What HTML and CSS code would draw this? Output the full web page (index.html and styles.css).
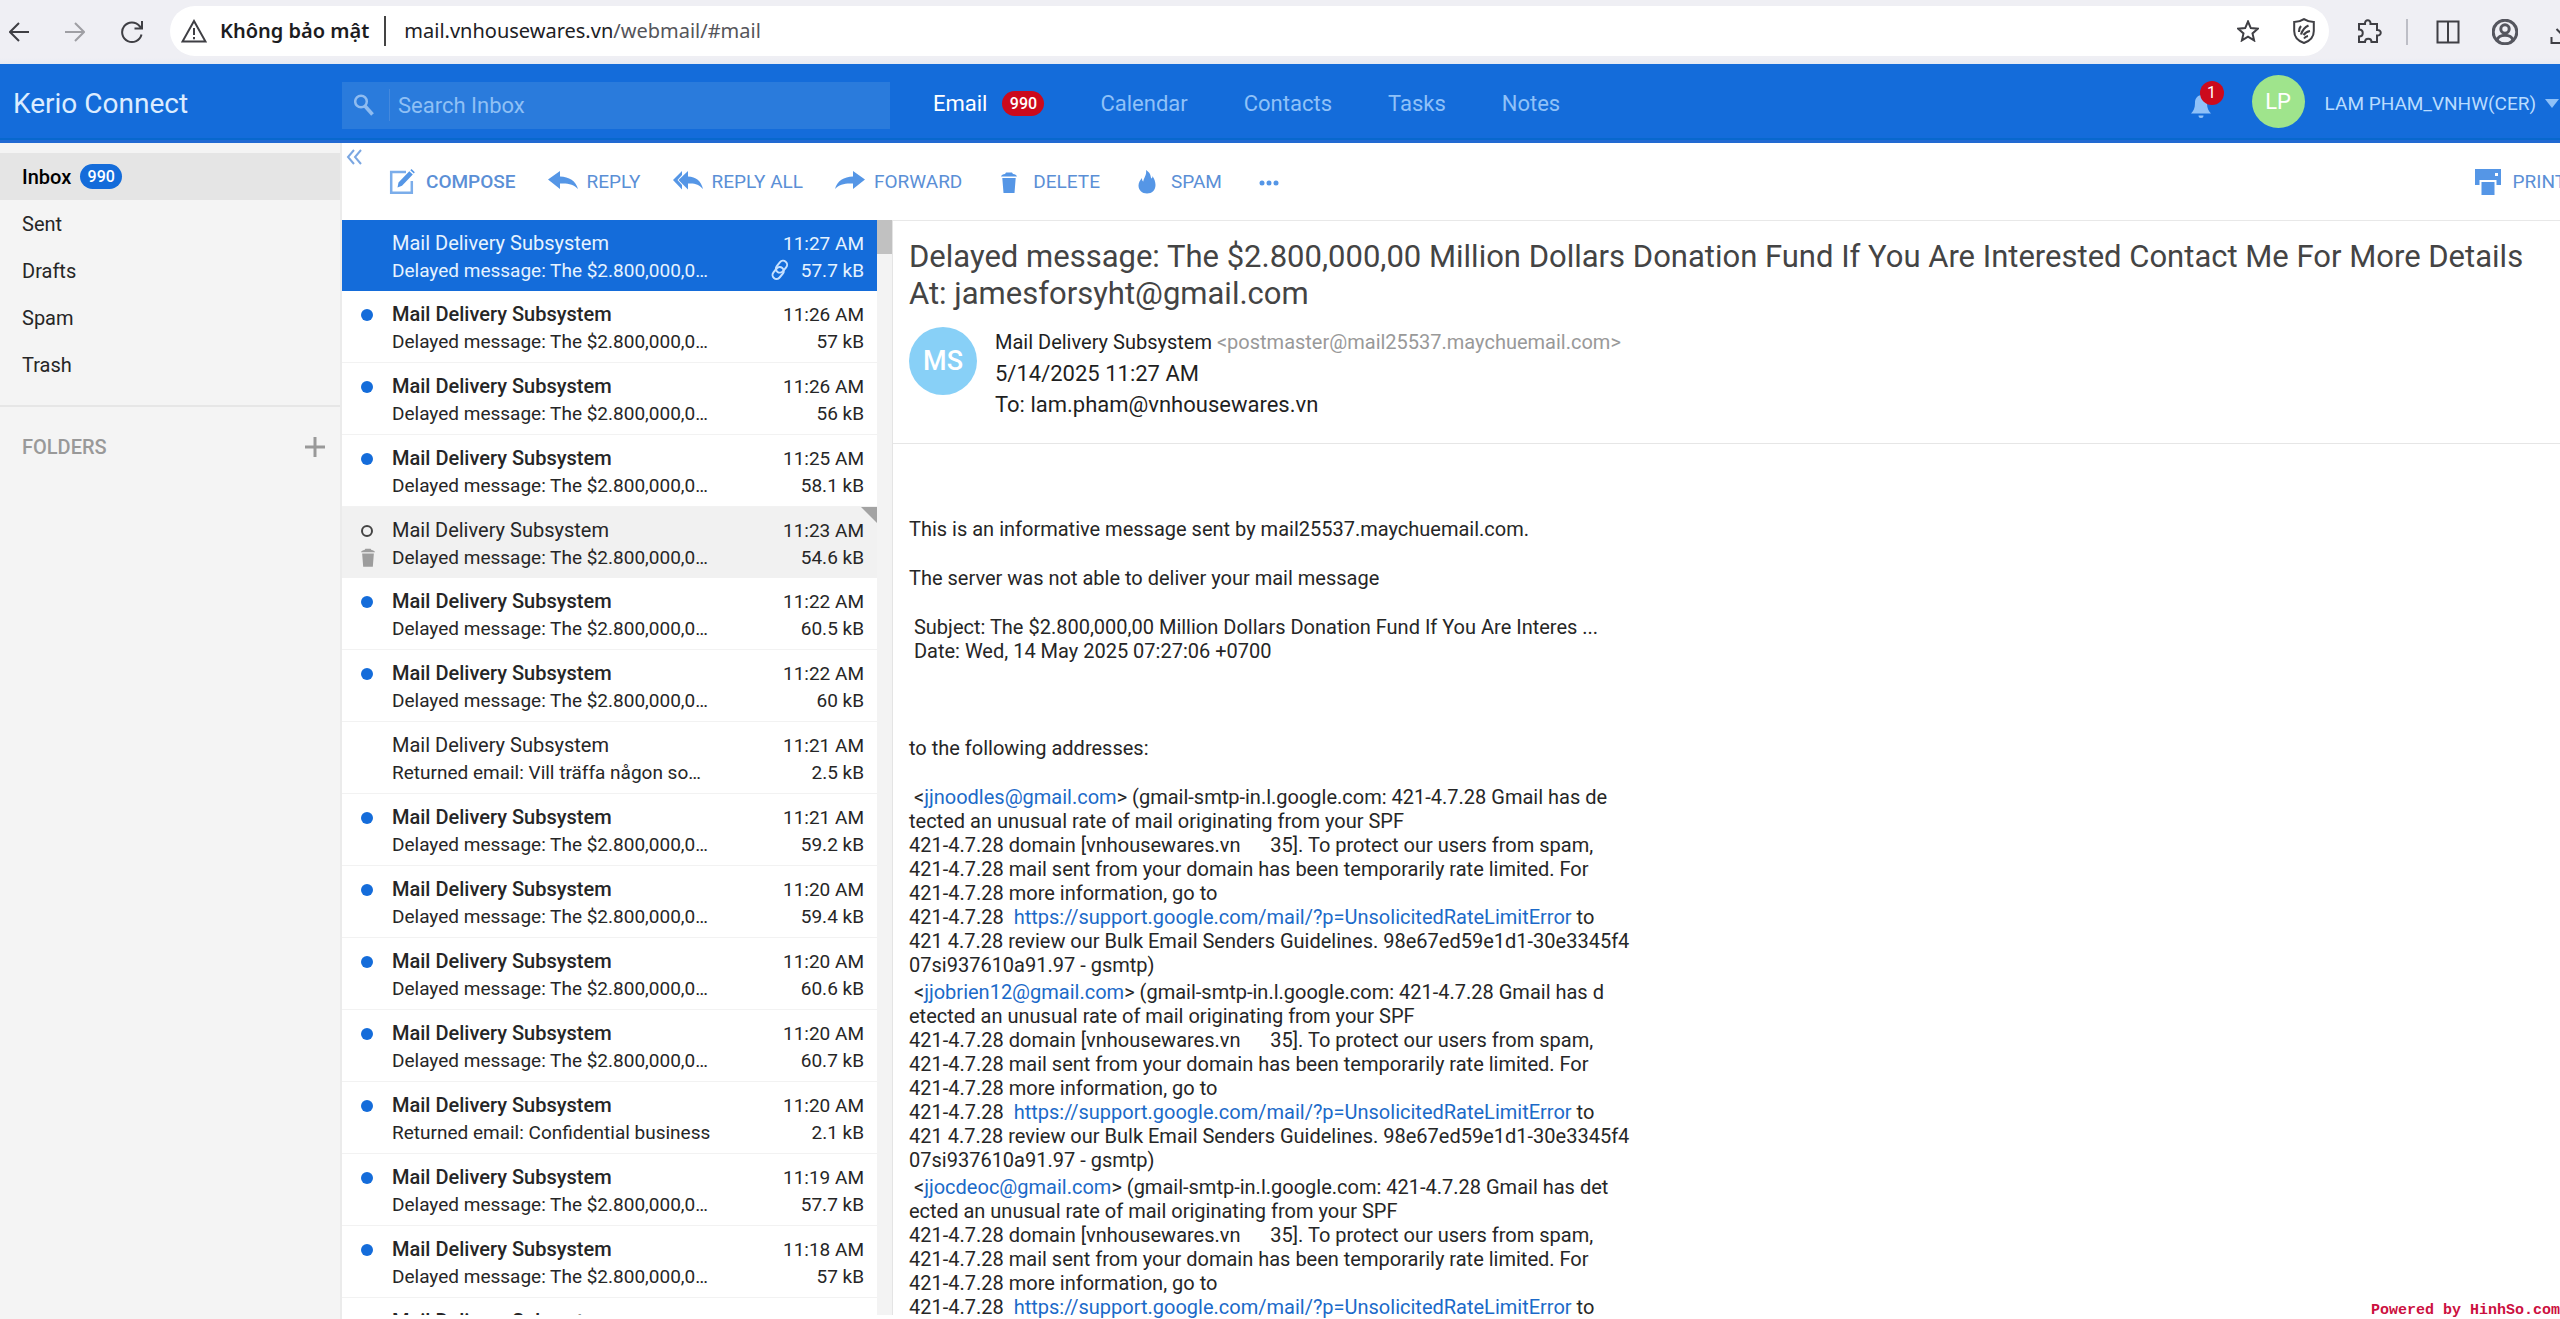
FILE: index.html
```html
<!DOCTYPE html>
<html lang="vi">
<head>
<meta charset="utf-8">
<title>Kerio Connect</title>
<link rel="stylesheet" href="styles.css">
</head>
<body>
<svg class="defs" width="0" height="0" aria-hidden="true">
  <symbol id="trash" viewBox="0 0 16 22"><path d="M5 1.500h6l1 1.500c2 .3 3.500 1 4 2.500H0C.5 4 2 3.300 4 3zM1.300 7h13.400L13.500 22h-11z"/></symbol>
  <symbol id="reply" viewBox="0 0 30 22"><path d="M0 8.500 12 0v5.500c9 .3 16 4.500 18 12.500-4-4.500-10-6-18-5.500V18z"/></symbol>
</svg>

<div class="browser">
  <div class="browser-nav">
    <button aria-label="Back"><svg width="20" height="22" viewBox="0 0 20 22"><path d="M20 11H1M10 2 1 11l9 9"/></svg></button>
    <button aria-label="Forward" class="off"><svg width="20" height="22" viewBox="0 0 20 22"><path d="M0 11h19M10 2l9 9-9 9"/></svg></button>
    <button aria-label="Reload"><svg width="22" height="24" viewBox="0 0 22 24"><path d="M20.500 14.500A9.800 9.800 0 1 1 18.500 6L21 8.500M21 1v7.500h-7.500"/></svg></button>
  </div>
  <div class="omnibox">
    <svg width="26" height="24" viewBox="0 0 26 24"><path d="M13 2 24.500 22.500h-23zM13 9v7M13 18v2.200"/></svg>
    <strong class="insecure">Không bảo mật</strong>
    <span class="url">mail.vnhousewares.vn<span class="path">/webmail/#mail</span></span>
    <button aria-label="Bookmark" class="star"><svg width="22" height="22" viewBox="0 0 22 22"><path d="m11 1.500 2.800 6.600 7 .6-5.300 4.700 1.600 7L11 16.600l-6.100 3.800 1.600-7L1.200 8.700l7-.6z"/></svg></button>
    <button aria-label="Shield"><svg width="22" height="26" viewBox="0 0 22 26"><path d="M11 1.200c3 2 6 2.800 9.800 2.800v9c0 6-4 10-9.800 12C5.200 23 1.200 19 1.200 13V4C5 4 8 3.200 11 1.200z"/><path d="M15.500 7.500C12 9 9.500 12 8 16.500M8 8c-1.500 1.500-2 3.500-2 6M17 13c-3 .5-5 2-6.500 4" stroke-width="2.200"/><path d="M15 18c-2 .3-3 1-4 2.500"/></svg></button>
  </div>
  <div class="browser-tools">
    <button aria-label="Extensions"><svg width="26" height="26" viewBox="0 0 26 26"><path d="M3 5h6c-.5-5 6-5 5.500 0H21v6c5-.5 5 6 0 5.500V23h-5.500c0-4.500-6.500-4.500-6.500 0H3v-5.500c5 0 5-7 0-7z"/></svg></button>
    <span class="sep"></span>
    <button aria-label="Split"><svg width="24" height="24" viewBox="0 0 24 24"><path d="M1.500 1.500h21v21h-21zM12 1.500v21"/></svg></button>
    <button aria-label="Profile"><svg width="26" height="26" viewBox="0 0 26 26" class="thick"><circle cx="13" cy="13" r="11.800"/><circle cx="13" cy="10" r="4.200"/><path d="M5 21.500c1-7 15-7 16 0"/></svg></button>
    <button aria-label="Downloads"><svg width="26" height="26" viewBox="0 0 26 26"><path d="M13 1v15M6.500 10l6.500 6.500 6.500-6.500M1.500 18v6h23v-6"/></svg></button>
  </div>
</div>

<header class="topbar">
  <div class="brand">Kerio Connect</div>
  <form class="search">
    <svg width="20" height="22" viewBox="0 0 20 22"><circle cx="7" cy="7.500" r="5.800"/><path d="M11 12l7.500 8.500" stroke-width="3.600"/></svg>
    <input type="text" placeholder="Search Inbox" aria-label="Search Inbox">
  </form>
  <nav class="modules">
    <a href="#mail" class="current">Email <span class="badge red">990</span></a>
    <a href="#calendar">Calendar</a>
    <a href="#contacts">Contacts</a>
    <a href="#tasks">Tasks</a>
    <a href="#notes">Notes</a>
  </nav>
  <button class="bell" aria-label="Notifications">
    <svg width="20" height="24" viewBox="0 0 20 24"><path d="M10 0c4.500 1 6 4 6 8 0 5 1.500 8 4 10.500H0C2.500 16 4 13 4 8c0-4 1.500-7 6-8zM7.500 20.500h5a2.500 2.500 0 0 1-5 0z"/></svg>
    <span class="count">1</span>
  </button>
  <span class="avatar me">LP</span>
  <button class="user">LAM PHAM_VNHW(CER)<span class="caret"></span></button>
</header>

<div class="app">
  <aside class="sidebar">
    <ul class="folders">
      <li class="active"><a href="#inbox">Inbox</a><span class="badge blue">990</span></li>
      <li><a href="#sent">Sent</a></li>
      <li><a href="#drafts">Drafts</a></li>
      <li><a href="#spam">Spam</a></li>
      <li><a href="#trash">Trash</a></li>
    </ul>
    <div class="folders-head">FOLDERS
      <button aria-label="Add folder"><svg width="20" height="20" viewBox="0 0 20 20"><path d="M10 0v20M0 10h20"/></svg></button>
    </div>
  </aside>

  <div class="work">
    <div class="toolbar">
      <button class="collapse" aria-label="Collapse"><svg width="17" height="16" viewBox="0 0 17 16"><path d="M8 1 2 8l6 7M15 1 9 8l6 7"/></svg></button>
      <button class="tool strong"><svg width="30" height="26" viewBox="0 0 30 26"><path class="line" d="M19 3H4.200v20.800h20.600V12"/><path d="m10.500 18.500 1-5L22.300 2.200l3.500 3.200L15 16.800zM23.300 1.200 24.500 0l3.300 3.200-1 1.200z"/></svg>COMPOSE</button>
      <button class="tool"><svg width="30" height="22"><use href="#reply"/></svg>REPLY</button>
      <button class="tool"><svg width="30" height="22" viewBox="0 0 30 22"><path d="M0 9 9 0v4L4.500 9 9 14v4.500zM5.500 9 15 0v5.500c8 .3 13 4.500 15 12.500-4-4.500-8-6-15-5.500v6z"/></svg>REPLY ALL</button>
      <button class="tool"><svg width="30" height="22" viewBox="0 0 30 22"><path d="M30 8.500 18 0v5.500C9 5.800 2 10 0 18c4-4.500 10-6 18-5.500V18z"/></svg>FORWARD</button>
      <button class="tool"><svg width="30" height="22"><use href="#trash"/></svg>DELETE</button>
      <button class="tool"><svg width="30" height="24" viewBox="0 0 30 24"><path d="M14 0c6 4 4 7 5.500 8.500C20.500 8 20.500 7 20.300 6c2 2.500 3.200 6 3.200 9 0 5-3.500 8.500-8.500 8.500S6.500 20 6.500 15.500c0-3 1.500-5 3.500-7.500 0 2 .3 3 1.300 3.500C11.500 8 15 5 14 0z"/></svg>SPAM</button>
      <button class="tool" aria-label="More"><svg width="30" height="8" viewBox="0 0 30 8"><circle cx="8" cy="5" r="2.500"/><circle cx="15" cy="5" r="2.500"/><circle cx="22" cy="5" r="2.500"/></svg></button>
      <button class="tool print"><svg width="26" height="26" viewBox="0 0 26 26"><path fill-rule="evenodd" d="M0 0h26v16h-4.500v-5h-17v5H0zM20 4v3h3V4zM6.500 13h13v13h-13z"/></svg>PRINT</button>
    </div>

    <div class="panes">
      <div class="list-pane">
        <ul class="list">
          <li class="selected"><span class="from">Mail Delivery Subsystem</span><time>11:27 AM</time><span class="preview">Delayed message: The $2.800,000,0…</span><span class="size"><svg width="20" height="20" viewBox="0 0 20 20"><g transform="rotate(-50 10 10)"><rect x="0" y="6.500" width="13" height="8" rx="4"/><rect x="7" y="5" width="13" height="8" rx="4"/></g></svg>57.7 kB</span></li>
          <li class="unread"><i class="dot"></i><span class="from">Mail Delivery Subsystem</span><time>11:26 AM</time><span class="preview">Delayed message: The $2.800,000,0…</span><span class="size">57 kB</span></li>
          <li class="unread"><i class="dot"></i><span class="from">Mail Delivery Subsystem</span><time>11:26 AM</time><span class="preview">Delayed message: The $2.800,000,0…</span><span class="size">56 kB</span></li>
          <li class="unread"><i class="dot"></i><span class="from">Mail Delivery Subsystem</span><time>11:25 AM</time><span class="preview">Delayed message: The $2.800,000,0…</span><span class="size">58.1 kB</span></li>
          <li class="hover"><i class="dot"></i><span class="from">Mail Delivery Subsystem</span><time>11:23 AM</time><svg class="bin" width="14" height="20"><use href="#trash"/></svg><span class="preview">Delayed message: The $2.800,000,0…</span><span class="size">54.6 kB</span></li>
          <li class="unread"><i class="dot"></i><span class="from">Mail Delivery Subsystem</span><time>11:22 AM</time><span class="preview">Delayed message: The $2.800,000,0…</span><span class="size">60.5 kB</span></li>
          <li class="unread"><i class="dot"></i><span class="from">Mail Delivery Subsystem</span><time>11:22 AM</time><span class="preview">Delayed message: The $2.800,000,0…</span><span class="size">60 kB</span></li>
          <li><span class="from">Mail Delivery Subsystem</span><time>11:21 AM</time><span class="preview">Returned email: Vill träffa någon so…</span><span class="size">2.5 kB</span></li>
          <li class="unread"><i class="dot"></i><span class="from">Mail Delivery Subsystem</span><time>11:21 AM</time><span class="preview">Delayed message: The $2.800,000,0…</span><span class="size">59.2 kB</span></li>
          <li class="unread"><i class="dot"></i><span class="from">Mail Delivery Subsystem</span><time>11:20 AM</time><span class="preview">Delayed message: The $2.800,000,0…</span><span class="size">59.4 kB</span></li>
          <li class="unread"><i class="dot"></i><span class="from">Mail Delivery Subsystem</span><time>11:20 AM</time><span class="preview">Delayed message: The $2.800,000,0…</span><span class="size">60.6 kB</span></li>
          <li class="unread"><i class="dot"></i><span class="from">Mail Delivery Subsystem</span><time>11:20 AM</time><span class="preview">Delayed message: The $2.800,000,0…</span><span class="size">60.7 kB</span></li>
          <li class="unread"><i class="dot"></i><span class="from">Mail Delivery Subsystem</span><time>11:20 AM</time><span class="preview">Returned email: Confidential business</span><span class="size">2.1 kB</span></li>
          <li class="unread"><i class="dot"></i><span class="from">Mail Delivery Subsystem</span><time>11:19 AM</time><span class="preview">Delayed message: The $2.800,000,0…</span><span class="size">57.7 kB</span></li>
          <li class="unread"><i class="dot"></i><span class="from">Mail Delivery Subsystem</span><time>11:18 AM</time><span class="preview">Delayed message: The $2.800,000,0…</span><span class="size">57 kB</span></li>
          <li class="unread"><i class="dot"></i><span class="from">Mail Delivery Subsystem</span><time>11:17 AM</time></li>
        </ul>
        <div class="scrollbar"><div class="thumb"></div></div>
      </div>

      <article class="message">
        <header class="message-head">
          <h1>Delayed message: The $2.800,000,00 Million Dollars Donation Fund If You Are Interested Contact Me For More Details At: jamesforsyht@gmail.com</h1>
          <div class="sender">
            <span class="avatar ms">MS</span>
            <div class="meta">
              <div class="who">Mail Delivery Subsystem <span class="addr">&lt;postmaster@mail25537.maychuemail.com&gt;</span></div>
              <div>5/14/2025 11:27 AM</div>
              <div>To: lam.pham@vnhousewares.vn</div>
            </div>
          </div>
        </header>
        <div class="body">
<p>This is an informative message sent by mail25537.maychuemail.com.</p>
<p>The server was not able to deliver your mail message</p>
<p class="quoted"> Subject: The $2.800,000,00 Million Dollars Donation Fund If You Are Interes ...
 Date: Wed, 14 May 2025 07:27:06 +0700</p>
<p>to the following addresses:</p>
<p class="failure"> &lt;<a href="#a1">jjnoodles@gmail.com</a>&gt; (gmail-smtp-in.l.google.com: 421-4.7.28 Gmail has de
tected an unusual rate of mail originating from your SPF
421-4.7.28 domain [vnhousewares.vn      35]. To protect our users from spam,
421-4.7.28 mail sent from your domain has been temporarily rate limited. For
421-4.7.28 more information, go to
421-4.7.28  <a href="#l1">https://support.google.com/mail/?p=UnsolicitedRateLimitError</a> to
421 4.7.28 review our Bulk Email Senders Guidelines. 98e67ed59e1d1-30e3345f4
07si937610a91.97 - gsmtp)</p>
<p class="failure"> &lt;<a href="#a2">jjobrien12@gmail.com</a>&gt; (gmail-smtp-in.l.google.com: 421-4.7.28 Gmail has d
etected an unusual rate of mail originating from your SPF
421-4.7.28 domain [vnhousewares.vn      35]. To protect our users from spam,
421-4.7.28 mail sent from your domain has been temporarily rate limited. For
421-4.7.28 more information, go to
421-4.7.28  <a href="#l2">https://support.google.com/mail/?p=UnsolicitedRateLimitError</a> to
421 4.7.28 review our Bulk Email Senders Guidelines. 98e67ed59e1d1-30e3345f4
07si937610a91.97 - gsmtp)</p>
<p class="failure"> &lt;<a href="#a3">jjocdeoc@gmail.com</a>&gt; (gmail-smtp-in.l.google.com: 421-4.7.28 Gmail has det
ected an unusual rate of mail originating from your SPF
421-4.7.28 domain [vnhousewares.vn      35]. To protect our users from spam,
421-4.7.28 mail sent from your domain has been temporarily rate limited. For
421-4.7.28 more information, go to
421-4.7.28  <a href="#l3">https://support.google.com/mail/?p=UnsolicitedRateLimitError</a> to</p>
        </div>
      </article>
    </div>
  </div>
</div>
<div class="credit">Powered by HinhSo.com</div>
</body>
</html>
```
FILE: styles.css
```css
* { box-sizing: border-box; }

body {
  margin: 0;
  height: 100vh;
  display: flex;
  flex-direction: column;
  overflow: hidden;
  position: relative;
  background: #fff;
  color: #262626;
  font: 20px/24px Roboto, sans-serif;
}

button { border: 0; padding: 0; background: none; color: inherit; font: inherit; }
a { color: inherit; text-decoration: none; }
ul { list-style: none; margin: 0; padding: 0; }
svg { display: block; flex: none; }
.defs { position: absolute; }

/* browser chrome */
.browser {
  flex: none;
  height: 64px;
  display: flex;
  align-items: center;
  padding-left: 9px;
  gap: 27px;
  background: linear-gradient(#efeff4 58px, #e6eaf3);
  font-family: "Noto Sans", sans-serif;
}
.browser svg { fill: none; stroke: #3f3f44; stroke-width: 2; }
.browser .thick { stroke: #55565e; stroke-width: 3; }
.browser-nav { display: flex; align-items: center; gap: 36px; }
.off { opacity: .45; }
.omnibox {
  flex: 1;
  height: 50px;
  margin-bottom: 2px;
  border-radius: 25px;
  background: #fff;
  display: flex;
  align-items: center;
  padding: 0 14px 0 11px;
}
.insecure {
  margin-left: 13px;
  padding-right: 15px;
  border-right: 2px solid #444;
  line-height: 30px;
  font-weight: 600;
  color: #1c1c1f;
}
.url { flex: 1; margin-left: 18px; color: #202024; }
.path { color: #55555a; }
.star { margin-right: 34px; }
.browser-tools { display: flex; align-items: center; gap: 32px; margin-right: -16px; }
.sep { width: 2px; height: 26px; margin: 0 -4px 0 -8px; background: #bdbec6; }

/* application header */
.topbar {
  flex: none;
  height: 79px;
  display: flex;
  align-items: center;
  background: #146cda;
  box-shadow: inset 0 -3px #2169d2, inset 0 -5px #0868cd;
  color: #8fc1f8;
  font-size: 22px;
}
.brand { width: 342px; padding-left: 13px; font-size: 28px; color: #dcecff; }
.search {
  width: 548px;
  height: 47px;
  margin-top: 3px;
  display: flex;
  align-items: center;
  padding-left: 12px;
  gap: 15px;
  background: #2a7bdc;
}
.search svg { fill: none; stroke: #8fbcf0; stroke-width: 2.500; }
.search input {
  flex: 1;
  min-width: 0;
  height: 32px;
  border: 0;
  border-left: 1px solid #4489de;
  padding: 0 0 0 8px;
  background: none;
  font: inherit;
  color: #fff;
  outline: 0;
}
.search input::placeholder { color: #8fc0f5; opacity: 1; }
.modules { flex: 1; display: flex; align-items: center; gap: 56px; padding-left: 43px; }
.modules .current { display: flex; align-items: center; gap: 15px; color: #fff; }
.badge {
  height: 25px;
  min-width: 42px;
  border-radius: 13px;
  text-align: center;
  font-size: 16px;
  font-weight: 500;
  line-height: 25px;
  color: #fff;
}
.red { background: #cc0a1c; }
.blue { background: #146cda; }
.bell { position: relative; margin: 6px 41px 0 0; }
.bell svg { fill: #8fc1f8; }
.count {
  position: absolute;
  left: 9px;
  top: -14px;
  width: 24px;
  height: 24px;
  border-radius: 50%;
  background: #cc0a1c;
  color: #fff;
  font-size: 16px;
}
.avatar { flex: none; border-radius: 50%; display: grid; place-items: center; color: #fff; }
.me { width: 53px; height: 53px; margin-bottom: 4px; background: #9fe48c; }
.user {
  display: flex;
  align-items: center;
  gap: 9px;
  padding: 0 1px 0 20px;
  font-size: 19px;
  color: #b9dcff;
}
.caret { border: 7px solid transparent; border-top: 9px solid #8fc1f8; border-bottom: 0; }

/* folders */
.app { flex: 1; min-height: 0; display: flex; }
.sidebar {
  flex: none;
  width: 342px;
  padding-top: 10px;
  background: #f4f4f4;
  border-right: 2px solid #ebebeb;
}
.folders { padding-bottom: 17px; border-bottom: 2px solid #e6e6e6; }
.folders li { height: 47px; display: flex; align-items: center; gap: 9px; padding-left: 22px; }
.folders .active { background: #e5e5e5; color: #000; font-weight: 500; }
.folders-head {
  display: flex;
  align-items: center;
  justify-content: space-between;
  padding: 28px 15px 0 22px;
  font-weight: 500;
  color: #999;
}
.folders-head svg { stroke: #999; stroke-width: 3; }

/* toolbar */
.work { flex: 1; min-width: 0; display: flex; flex-direction: column; }
.toolbar {
  flex: none;
  height: 77px;
  display: flex;
  align-items: center;
  gap: 32px;
  overflow: hidden;
  font-size: 19px;
  color: #5b8fd6;
}
.collapse { align-self: flex-start; margin: 6px -8px 0 4px; }
.collapse svg { fill: none; stroke: #7ba7e2; stroke-width: 2; }
.tool { display: flex; align-items: center; gap: 9px; }
.tool svg { fill: #5596e6; }
.tool .line { fill: none; stroke: #7badea; stroke-width: 2.500; }
.strong { font-weight: 500; }
.print { gap: 12px; margin: 0 -6px 0 auto; }

/* message list */
.panes { flex: 1; min-height: 0; display: flex; }
.list-pane { flex: none; width: 551px; display: flex; margin-bottom: 4px; border-right: 1px solid #e4e4e4; overflow: hidden; }
.list { flex: 1; overflow: hidden; }
.list li {
  position: relative;
  height: 72px;
  display: grid;
  grid-template-columns: 31px 1fr auto;
  grid-template-rows: 27px 26px;
  align-items: center;
  padding: 10px 13px 0 19px;
  border-bottom: 1px solid #f2f2f2;
  line-height: 27px;
}
.list .selected, .list .hover { height: 71px; border-bottom: 0; }
.list .selected { background: #146cda; color: #e6f3ff; }
.list .hover { background: #f1f1f1; }
.hover::after {
  content: "";
  position: absolute;
  top: 0;
  right: 0;
  border: 8px solid #a3a3a3;
  border-left-color: transparent;
  border-bottom-color: transparent;
}
.dot { grid-column: 1; width: 12px; height: 12px; border-radius: 50%; background: #146cda; }
.hover .dot { border: 2px solid #444; background: none; }
.bin { grid-column: 1; grid-row: 2; fill: #9d9d9d; }
.from { grid-column: 2; grid-row: 1; }
.unread .from { font-weight: 500; }
time { grid-column: 3; grid-row: 1; font-size: 19px; text-align: right; }
.preview { grid-column: 2; grid-row: 2; font-size: 19px; white-space: nowrap; }
.size { grid-column: 3; grid-row: 2; font-size: 19px; display: flex; align-items: center; justify-content: flex-end; gap: 11px; }
.size svg { fill: none; stroke: #c5e0ff; stroke-width: 2; overflow: visible; }
.scrollbar { width: 15px; background: #f3f3f3; }
.thumb { height: 34px; background: #c1c1c1; }

/* message */
.message { flex: 1; min-width: 0; overflow: hidden; border-top: 1px solid #e8e8e8; }
.message-head { padding: 17px 16px 23px; border-bottom: 1px solid #e6e6e6; }
h1 { margin: 0; font-size: 31px; line-height: 37px; font-weight: 400; color: #444; }
.sender { display: flex; gap: 18px; padding-top: 15px; }
.ms { width: 68px; height: 68px; background: #88d0f7; font-size: 27px; font-weight: 500; }
.meta { font-size: 22px; line-height: 31px; color: #1f1f1f; }
.who { font-size: 20px; }
.addr { color: #999; }
.body { padding: 73px 16px 0; white-space: pre; display: flex; flex-direction: column; }
.body p { margin: 0 0 25px; }
.body .quoted { margin-bottom: 73px; }
.body .failure { margin-bottom: 3px; }
.body a { color: #1b6ac9; }

.credit {
  position: absolute;
  right: 0;
  bottom: 0;
  font: bold 15px/16px "Liberation Mono", monospace;
  color: #cc1040;
}
```
